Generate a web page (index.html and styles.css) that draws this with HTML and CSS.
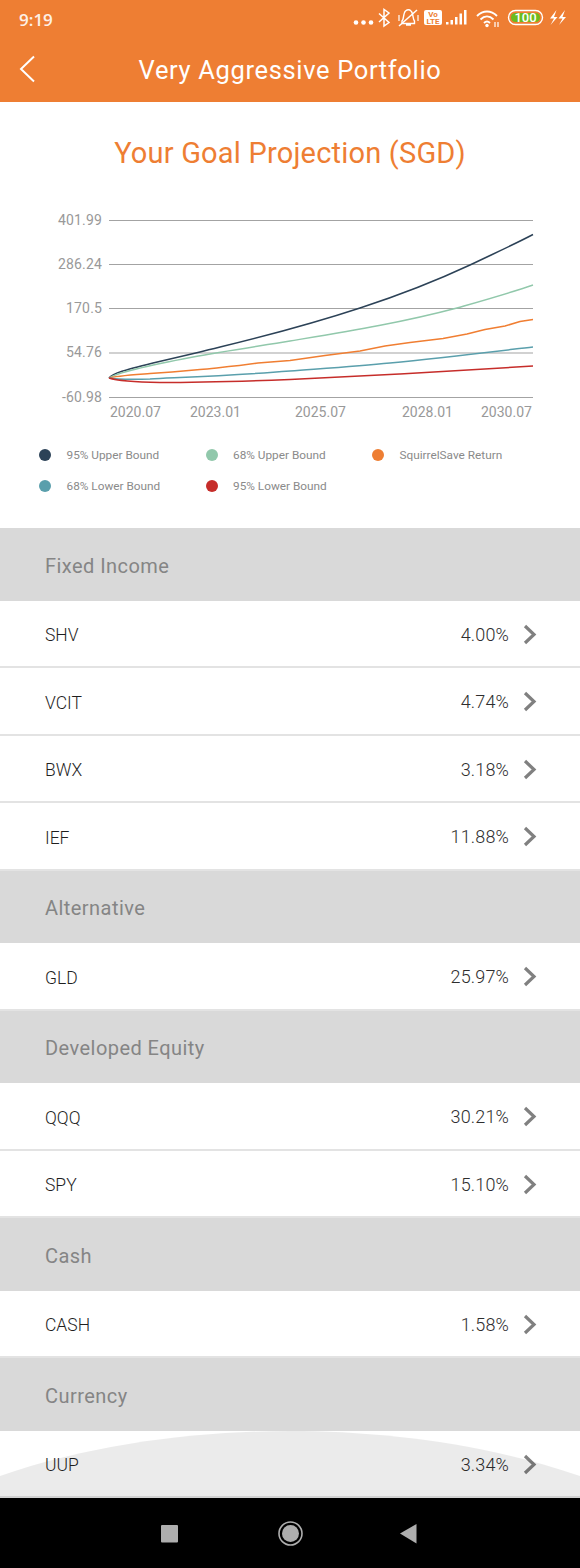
FILE: index.html
```html
<!DOCTYPE html>
<html lang="en">
<head>
<meta charset="utf-8">
<title>Very Aggressive Portfolio</title>
<link rel="stylesheet" href="styles.css">
</head>
<body>
<div class="phone">
  <header class="top">
    <div class="status">
      <span class="time">9:19</span>
      <svg class="status-icons" width="230" height="38" viewBox="350 0 230 38">
        <g fill="#fff">
          <circle cx="356" cy="22.500" r="2.300"/><circle cx="363.500" cy="22.500" r="2.300"/><circle cx="371" cy="22.500" r="2.300"/>
        </g>
        <path d="M379 13.500l10 9-5 3.500V9.500l5 3.500-10 9" fill="none" stroke="#fff" stroke-width="1.500"/>
        <path d="M402 21c2-1 1-8 3.500-10 2-1.500 4-1.500 5.500 0 2.500 2 1.500 8 3.500 10v2.500h-12.500z M406 25h5" fill="none" stroke="#fff" stroke-width="1.400"/>
        <path d="M399 26L417 10" stroke="#fff" stroke-width="1.500"/>
        <path d="M399 15v6M418 15v6" stroke="#fff" stroke-width="1.200"/>
        <rect x="424" y="10" width="18" height="15" rx="2" fill="#fff"/>
        <text class="volte" x="433" y="17">Vo</text>
        <text class="volte" x="433" y="24">LTE</text>
        <g fill="#fff">
          <rect x="446" y="22" width="2.500" height="2.500"/><rect x="450.500" y="20" width="2.500" height="4.500"/>
          <rect x="455" y="17" width="2.500" height="7.500"/><rect x="459.500" y="13.500" width="2.500" height="11"/>
          <rect x="464" y="10" width="2.500" height="14.500"/>
        </g>
        <path d="M477 16c6-6 14-6 20 0M480.500 19.500c4-4 9-4 13 0M484 23c2-2 4-2 6 0" fill="none" stroke="#fff" stroke-width="1.900"/>
        <circle cx="487" cy="25.500" r="1.700" fill="#fff"/>
        <path d="M495 22v5M498 22v5" stroke="#fff" stroke-width="1.200"/>
        <rect x="508.500" y="10.500" width="34" height="14" rx="7" fill="none" stroke="#fff" stroke-width="1.400"/>
        <rect x="511" y="13" width="29" height="9" rx="4.500" fill="#6cbb1e"/>
        <text class="batt" x="525.500" y="22">100</text>
        <path d="M556.500 10l-6.500 8.500h4L550.500 25l7-8h-3.500zM565 10l-6.500 8.500h4L559 25l7-8h-3.500z" fill="#fff"/>
      </svg>
    </div>
    <div class="toolbar">
      <svg class="back" width="16" height="28" viewBox="0 0 16 28"><path d="M15 1.500L2 14l13 12.500" fill="none" stroke="#fff" stroke-width="2"/></svg>
      <h1>Very Aggressive Portfolio</h1>
    </div>
  </header>

  <main class="content">
    <section class="chart-card">
      <h2>Your Goal Projection (SGD)</h2>
      <svg class="chart" width="580" height="226" viewBox="0 204 580 226">
        <g class="grid">
          <path d="M109 220.500H533M109 264.500H533M109 308.500H533M109 353H533M109 397.500H533"/>
        </g>
        <g class="ylab">
          <text x="102" y="224.500">401.99</text>
          <text x="102" y="268.500">286.24</text>
          <text x="102" y="313">170.5</text>
          <text x="102" y="357">54.76</text>
          <text x="102" y="402">-60.98</text>
        </g>
        <g class="xlab">
          <text x="110" y="417">2020.07</text>
          <text x="190" y="417">2023.01</text>
          <text x="295" y="417">2025.07</text>
          <text x="402" y="417">2028.01</text>
          <text x="481" y="417">2030.07</text>
        </g>
        <g class="lines">
          <path stroke="#2c4257" d="M109 378C113 373 125 370 153 363L200 352C240 342 290 331 360 308C400 295 440 279 470 265C495 253 515 244 533 234.500"/>
          <path stroke="#91c8ab" d="M109 378C115 374 135 368 193 357C225 351 260 346 290 341C350 331 400 323 457 308C485 300 510 293 533 285"/>
          <path stroke="#f07e32" d="M109 378C114 376 130 375 150 373.500L172 372L200 369.500C225 367 240 366 258 363L290 360.500L325 355.500L360 351L385 346L410 342.500L443 338.500L467 334L485 329.500L505 326L520 321.500L533 319.500"/>
          <path stroke="#5a9fac" d="M109 378C115 379 130 379.500 150 379C190 377 240 375 290 371C330 368 360 366 390 363C440 358 490 352 533 347"/>
          <path stroke="#c62d2a" d="M109 378C118 381 135 382 160 382.500C200 382.500 250 381 290 379.500C330 377.500 365 376 400 374C445 371.500 490 369 533 366"/>
        </g>
      </svg>
      <ul class="legend">
        <li><i class="dot navy"></i>95% Upper Bound</li>
        <li><i class="dot mint"></i>68% Upper Bound</li>
        <li><i class="dot orange"></i>SquirrelSave Return</li>
        <li><i class="dot teal"></i>68% Lower Bound</li>
        <li><i class="dot red"></i>95% Lower Bound</li>
      </ul>
    </section>

    <h3 class="group">Fixed Income</h3>
    <div class="row"><span>SHV</span><b>4.00%</b><svg class="chev" viewBox="0 0 14 21"><path d="M2 2l9 8.500-9 8.500"/></svg></div>
    <div class="row"><span>VCIT</span><b>4.74%</b><svg class="chev" viewBox="0 0 14 21"><path d="M2 2l9 8.500-9 8.500"/></svg></div>
    <div class="row"><span>BWX</span><b>3.18%</b><svg class="chev" viewBox="0 0 14 21"><path d="M2 2l9 8.500-9 8.500"/></svg></div>
    <div class="row"><span>IEF</span><b>11.88%</b><svg class="chev" viewBox="0 0 14 21"><path d="M2 2l9 8.500-9 8.500"/></svg></div>
    <h3 class="group">Alternative</h3>
    <div class="row"><span>GLD</span><b>25.97%</b><svg class="chev" viewBox="0 0 14 21"><path d="M2 2l9 8.500-9 8.500"/></svg></div>
    <h3 class="group">Developed Equity</h3>
    <div class="row"><span>QQQ</span><b>30.21%</b><svg class="chev" viewBox="0 0 14 21"><path d="M2 2l9 8.500-9 8.500"/></svg></div>
    <div class="row"><span>SPY</span><b>15.10%</b><svg class="chev" viewBox="0 0 14 21"><path d="M2 2l9 8.500-9 8.500"/></svg></div>
    <h3 class="group">Cash</h3>
    <div class="row"><span>CASH</span><b>1.58%</b><svg class="chev" viewBox="0 0 14 21"><path d="M2 2l9 8.500-9 8.500"/></svg></div>
    <h3 class="group">Currency</h3>
    <div class="row"><span>UUP</span><b>3.34%</b><svg class="chev" viewBox="0 0 14 21"><path d="M2 2l9 8.500-9 8.500"/></svg></div>

    <svg class="swipe" width="580" height="67" viewBox="0 0 580 67"><path d="M0 45C95 12 200 0 290 0S485 12 580 45V67H0z"/></svg>
  </main>

  <nav class="navbar">
    <svg width="580" height="70" viewBox="0 0 580 70">
      <rect x="161" y="27" width="17" height="17.500" rx="1" fill="#aeaeae"/>
      <circle cx="290.500" cy="35.500" r="11.500" fill="none" stroke="#aeaeae" stroke-width="1.600"/>
      <circle cx="290.500" cy="35.500" r="8.500" fill="#aeaeae"/>
      <path d="M416.500 26v19.500L400 35.500z" fill="#aeaeae"/>
    </svg>
  </nav>
</div>
</body>
</html>
```
FILE: styles.css
```css
* { box-sizing: border-box; }
html, body { margin: 0; padding: 0; }
body { background: #fff; font-family: Roboto, "Liberation Sans", sans-serif; }
.phone { width: 580px; height: 1568px; overflow: hidden; display: flex; flex-direction: column; }

.top { background: #ee7e33; height: 102px; color: #fff; flex: none; }
.status { height: 38px; display: flex; justify-content: space-between; align-items: center; }
.time { font: 600 17px "Open Sans", sans-serif; padding-left: 19px; color: #fdf0e6; }
.status-icons { display: block; }
.volte { font: 700 8px Roboto, sans-serif; fill: #ee7e33; text-anchor: middle; }
.batt { font: 500 13px Roboto, sans-serif; fill: #fff; text-anchor: middle; }

.toolbar { position: relative; height: 64px; display: flex; align-items: center; justify-content: center; }
.toolbar h1 { margin: 0; font: 400 25.500px Roboto, sans-serif; letter-spacing: .65px; }
.back { position: absolute; left: 19px; top: 17px; }

.content { position: relative; height: 1396px; flex: none; overflow: hidden; }
.chart-card { height: 426px; padding-top: 32px; }
.chart-card h2 { margin: 0; height: 70px; font: 400 29px/38px Roboto, sans-serif; letter-spacing: .2px; color: #ee7e33; text-align: center; }
.chart { display: block; }

.grid path { stroke: #a3a3a3; stroke-width: 1; fill: none; }
.ylab text { font: 400 14px Roboto, sans-serif; fill: #999; letter-spacing: .15px; text-anchor: end; }
.xlab text { font: 400 14px Roboto, sans-serif; fill: #999; }
.lines path { fill: none; stroke-width: 1.500; }

.legend { list-style: none; margin: 15px 0 0; padding: 0 0 0 39px; display: flex; flex-wrap: wrap; row-gap: 11px; }
.legend li { width: 166.500px; height: 20px; display: flex; align-items: center; gap: 15.500px; font-size: 11.800px; color: #8a8a8a; }
.dot { width: 12px; height: 12px; border-radius: 50%; flex: none; }
.navy { background: #2c4257; }
.mint { background: #91c8ab; }
.orange { background: #ee7e33; }
.teal { background: #5a9fac; }
.red { background: #c62d2a; }

.group { margin: 0; height: 72.500px; padding: 3px 0 0 45px; background: #d9d9d9; display: flex; align-items: center; font: 400 20px Roboto, sans-serif; letter-spacing: .45px; color: #858585; }
.row { height: 67.500px; padding: 2px 44px 0 45px; display: flex; align-items: center; border-bottom: 2px solid #e3e3e3; font-size: 17.500px; font-weight: 300; color: #1f1f1f; }
.row span { flex: 1; padding-top: 2px; }
.row b { font-weight: 300; font-size: 18px; letter-spacing: .15px; margin-right: 14px; color: #2e2e2e; }
.chev { width: 14px; height: 21px; flex: none; margin: 0 -1px 0 0; }
.chev path { fill: none; stroke: #808080; stroke-width: 3.200; }

.swipe { position: absolute; left: 0; bottom: 0; display: block; }
.swipe path { fill: rgba(0, 0, 0, .08); }

.navbar { background: #000; height: 70px; flex: none; }
.navbar svg { display: block; }
```
